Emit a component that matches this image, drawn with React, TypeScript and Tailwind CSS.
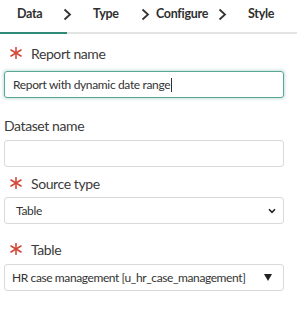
function Asterisk() {
  return (
    <svg width="12" height="12" viewBox="0 0 12 12" className="shrink-0">
      <g stroke="#d4483b" strokeWidth="1.6" strokeLinecap="round">
        <line x1="6" y1="0.5" x2="6" y2="11.5" />
        <line x1="1" y1="3" x2="11" y2="9" />
        <line x1="1" y1="9" x2="11" y2="3" />
      </g>
    </svg>
  );
}

function Chevron() {
  return (
    <svg width="9" height="13" viewBox="0 0 9 13" className="shrink-0">
      <polyline points="1.5,1.5 7,6.5 1.5,11.5" fill="none" stroke="#333" strokeWidth="1.8" />
    </svg>
  );
}

function Label({ text, required }: { text: string; required?: boolean }) {
  return (
    <div className="flex h-5 items-center gap-[9px] pl-[6px] text-[14px] tracking-[-0.4px] text-[#3b3b3b]">
      {required && <Asterisk />}
      <span>{text}</span>
    </div>
  );
}

export default function App() {
  return (
    <div className="h-[324px] w-[297px] bg-white font-['Lato','Liberation_Sans',sans-serif]">
      <div className="relative flex h-[34px] items-center pb-[6px] text-[12.5px] font-bold tracking-[-0.3px] text-[#2f2f2f]">
        <span className="ml-[17px] w-[24px]">Data</span>
        <span className="ml-[22px]"><Chevron /></span>
        <span className="ml-[21px] w-[26px]">Type</span>
        <span className="ml-[22px]"><Chevron /></span>
        <span className="ml-[6px] w-[52px]">Configure</span>
        <span className="ml-[10px]"><Chevron /></span>
        <span className="ml-[21px]">Style</span>
        <div className="absolute bottom-0 left-0 right-0 flex h-[2px]">
          <div className="w-[67px] bg-[#2f8a78]" />
          <div className="flex-1 bg-[#e3e3e3]" />
        </div>
      </div>

      <div className="px-[4px]">
        <div className="mt-[9px]">
          <Label text="Report name" required />
        </div>
        <div className="mt-[8px] flex h-[27px] w-[280px] items-center rounded-[3px] border border-[#5aa697] px-[8px] text-[12px] tracking-[-0.35px] text-[#333] shadow-[0_0_3px_1px_rgba(90,166,151,0.35)]">
          Report with dynamic date range<span className="ml-px h-[14px] w-px bg-[#333]" />
        </div>

        <div className="mt-[17px] flex h-5 items-center text-[14px] tracking-[-0.4px] text-[#3b3b3b]">Dataset name</div>
        <div className="mt-[5px] h-[27px] w-[280px] rounded-[3px] border border-[#d9d9d9]" />

        <div className="mt-[6px]">
          <Label text="Source type" required />
        </div>
        <div className="mt-[4px] flex h-[27px] w-[280px] items-center justify-between rounded-[3px] border border-[#d9d9d9] pl-[11px] pr-[7px] text-[12px] tracking-[-0.3px] text-[#333]">
          <span>Table</span>
          <svg width="8" height="6" viewBox="0 0 8 6">
            <polyline points="1,1.2 4,4.3 7,1.2" fill="none" stroke="#222" strokeWidth="1.6" />
          </svg>
        </div>

        <div className="mt-[15px]">
          <Label text="Table" required />
        </div>
        <div className="mt-[5px] flex h-[27px] w-[280px] items-center justify-between whitespace-nowrap rounded-[3px] border border-[#d9d9d9] pl-[7px] pr-[11px] text-[12px] tracking-[-0.4px] text-[#333]">
          <span>HR case management [u_hr_case_management]</span>
          <svg width="8" height="7" viewBox="0 0 8 7">
            <polygon points="0,0 8,0 4,7" fill="#222" />
          </svg>
        </div>
      </div>
    </div>
  );
}
